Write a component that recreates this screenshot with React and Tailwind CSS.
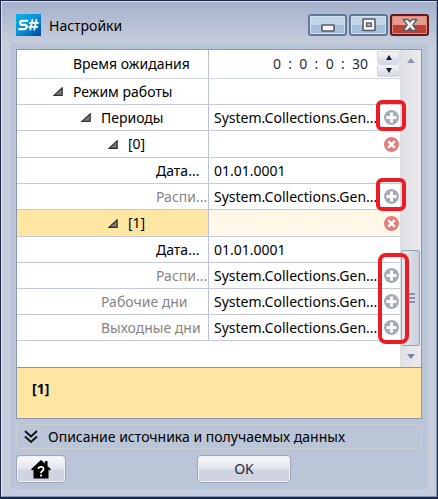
import React from "react";

const rows = [
  { label: "Режим работы", pad: "pl-[56px]", arrow: true },
  { label: "Периоды", pad: "pl-[84px]", arrow: true, value: "System.Collections.Gen...", action: "add" },
  { label: "[0]", pad: "pl-[111px]", arrow: true, action: "remove", index: true },
  { label: "Дата...", pad: "pl-[139px]", value: "01.01.0001" },
  { label: "Распи...", pad: "pl-[139px]", muted: true, value: "System.Collections.Gen...", action: "add" },
  { label: "[1]", pad: "pl-[111px]", arrow: true, action: "remove", index: true, selected: true },
  { label: "Дата...", pad: "pl-[139px]", value: "01.01.0001" },
  { label: "Распи...", pad: "pl-[139px]", muted: true, value: "System.Collections.Gen...", action: "add" },
  { label: "Рабочие дни", pad: "pl-[84px]", muted: true, value: "System.Collections.Gen...", action: "add" },
  { label: "Выходные дни", pad: "pl-[84px]", muted: true, value: "System.Collections.Gen...", action: "add" },
];

function Logo() {
  return (
    <svg viewBox="0 0 25 22" className="h-[22px] w-[25px]" aria-hidden="true">
      <defs>
        <linearGradient id="logo" x1="0" y1="0" x2="1" y2="1">
          <stop offset="0" stopColor="#0bb4e8" />
          <stop offset="0.5" stopColor="#0590d6" />
          <stop offset="1" stopColor="#0346a0" />
        </linearGradient>
      </defs>
      <rect width="25" height="22" fill="url(#logo)" />
      <g fill="none" stroke="#fff" strokeWidth="2.2">
        <path d="M12 6.8H5.8Q4.4 6.8 4.2 8.4T5.2 10.8H9.4Q10.9 11 10.6 13T8.6 15.2H2.2" />
        <path d="M16.6 5.2L14.2 16.4M20.6 5.2L18.2 16.4M13 8.8H22.8M12.2 12.8H22" strokeWidth="1.8" />
      </g>
    </svg>
  );
}

function ActionIcon({ kind }) {
  return kind === "add" ? (
    <svg viewBox="0 0 15 15" className="size-[15px]" aria-hidden="true">
      <circle cx="7.5" cy="7.5" r="7.5" fill="#a4acba" />
      <path d="M7.5 2.5V12.5M2.5 7.5H12.5" stroke="#fff" strokeWidth="3" />
    </svg>
  ) : (
    <svg viewBox="0 0 15 15" className="size-[15px]" aria-hidden="true">
      <circle cx="7.5" cy="7.5" r="7.5" fill="#e6797a" />
      <path d="M4.2 4.2L10.8 10.8M10.8 4.2L4.2 10.8" stroke="#fff" strokeWidth="2.6" />
    </svg>
  );
}

function Row({ label, pad, arrow, value, action, muted, index, selected }) {
  return (
    <div
      className={`flex border-b border-[#c3c9da] ${index ? "h-[27px]" : "h-[26px]"} ${selected ? "bg-[#fff8e8]" : "bg-white"}`}
    >
      <div
        className={`relative flex w-[192px] shrink-0 items-center border-r border-[#b9c2d6] ${pad} ${selected ? "bg-[#ffe6a3]" : ""} ${muted ? "text-[#858585]" : "text-black"}`}
      >
        {arrow && (
          <span className="absolute -translate-x-[20px]">
            <svg viewBox="0 0 10 9" className="h-[9px] w-[10px]" aria-hidden="true">
              <path d="M9.2 0.8V8.4H1Z" fill="#7a7a7a" stroke="#333" strokeWidth="1.2" />
            </svg>
          </span>
        )}
        <span className="whitespace-nowrap">{label}</span>
      </div>
      <div className="flex min-w-0 flex-1 items-center justify-between pr-[1px] pl-[5px]">
        <span className="whitespace-nowrap text-black">{value}</span>
        {action && (
          <button type="button" aria-label={action === "add" ? "Добавить" : "Удалить"}>
            <ActionIcon kind={action} />
          </button>
        )}
      </div>
    </div>
  );
}

const caption =
  "flex h-[22px] w-[39px] items-center justify-center rounded-[3px] border-2";
const blueCaption =
  "border-[#63779a] bg-linear-to-b from-[#c3d6e8] from-50% to-[#a5bfd9] to-50% shadow-[inset_0_0_0_1px_#d3e2ef]";
const command =
  "flex h-[28px] items-center justify-center rounded-[4px] border border-[#9aa6c2] bg-linear-to-b from-[#fafafc] via-[#e2e4ec] via-50% to-[#d0d4e1] to-55% shadow-[inset_0_0_0_1px_#eef0f6]";
const spin =
  "flex h-[13px] w-[23px] items-center justify-center rounded-[2px] border border-[#d5d9e4] bg-linear-to-b from-[#f5f6fa] to-[#d3d7e3]";

export default function App() {
  return (
    <main className="flex min-h-screen flex-col border border-b-2 border-[#1e2a45] bg-[#c6cddc] font-['Noto_Sans','Open_Sans',sans-serif] text-[14px] leading-[20px] text-black">
      <div className="flex flex-1 flex-col border border-[#8496ba] border-t-[#d9dfec] border-l-[#dfe3ee] px-[8px] pb-[7px]">
        <header className="-mx-[8px] flex h-[41px] items-start bg-linear-to-b from-[#a5b1cd] to-[#c6cddc] pr-[7px] pl-[14px] pt-[12px]">
          <Logo />
          <h1 className="ml-[8px] h-[22px] flex-1 leading-[24px]">Настройки</h1>
          <div className="flex gap-[2px]">
            <button type="button" aria-label="Свернуть" className={`${caption} ${blueCaption}`}>
              <svg viewBox="0 0 14 14" className="mt-[2px] size-[14px]" aria-hidden="true">
                <rect x="1" y="6" width="12" height="6" rx="0.5" fill="#f6f5f2" stroke="#555966" strokeWidth="1.6" />
              </svg>
            </button>
            <button type="button" aria-label="Развернуть" className={`${caption} ${blueCaption}`}>
              <svg viewBox="0 0 14 14" className="size-[14px]" aria-hidden="true">
                <rect x="1" y="1" width="12" height="11.5" rx="0.5" fill="#f6f5f2" stroke="#555966" strokeWidth="1.6" />
                <rect x="4.6" y="5" width="4.8" height="3.4" fill="#a7c0da" stroke="#555966" strokeWidth="1.3" />
              </svg>
            </button>
            <button
              type="button"
              aria-label="Закрыть"
              className={`${caption} border-[#5e1c20] bg-linear-to-b from-[#e39c92] from-50% to-[#bd4233] to-50% shadow-[inset_0_0_0_1px_#e08a7c]`}
            >
              <svg viewBox="0 0 16 14" className="h-[14px] w-[16px] shrink-0" aria-hidden="true">
                <path
                  d="M1.3 1.5H6L8 3.8L10 1.5H14.7L10.8 6.9L14.7 12.3H10L8 10L6 12.3H1.3L5.2 6.9Z"
                  fill="#f2f2f3"
                  stroke="#565b66"
                  strokeWidth="1.3"
                  strokeLinejoin="round"
                />
              </svg>
            </button>
          </div>
        </header>

        <div className="flex flex-1 flex-col bg-[#bac6d8] px-[6px] pt-[6px] pb-[6px]">
          <section className="border border-[#8a96ae]">
            <div className="relative flex h-[317px] bg-white">
              <div className="min-w-0 flex-1">
                <div className="flex h-[29px] border-b border-[#d3d8e4]">
                  <label htmlFor="timeout" className="flex w-[192px] shrink-0 items-center border-r border-[#b9c2d6] pl-[56px]">
                    Время ожидания
                  </label>
                  <div className="flex min-w-0 flex-1 items-center">
                    <input
                      id="timeout"
                      defaultValue="0  :  0  :  0  :  30"
                      className="min-w-0 flex-1 bg-transparent pr-[9px] text-right whitespace-pre text-[#1e2a40] outline-none"
                    />
                    <div className="flex flex-col">
                      <button type="button" aria-label="Больше" className={spin}>
                        <svg viewBox="0 0 6 5" className="h-[5px] w-[6px]" aria-hidden="true">
                          <path d="M3 0L6 5H0Z" fill="#111c33" />
                        </svg>
                      </button>
                      <button type="button" aria-label="Меньше" className={spin}>
                        <svg viewBox="0 0 6 5" className="h-[5px] w-[6px]" aria-hidden="true">
                          <path d="M0 0H6L3 5Z" fill="#111c33" />
                        </svg>
                      </button>
                    </div>
                  </div>
                </div>
                {rows.map((row, i) => (
                  <Row key={i} {...row} />
                ))}
              </div>

              <div className="flex w-[21px] shrink-0 flex-col items-center bg-linear-to-r from-[#dfe0e4] to-[#ececee]">
                <button type="button" aria-label="Вверх" className="flex h-[21px] w-full items-center justify-center">
                  <svg viewBox="0 0 8 5" className="h-[5px] w-[8px]" aria-hidden="true">
                    <path d="M4 0L8 5H0Z" fill="#8795b0" />
                  </svg>
                </button>
                <div className="flex w-full flex-1 flex-col justify-end px-[1px]">
                  <div className="flex h-[96px] flex-col items-center justify-center gap-[2px] rounded-[2px] border border-[#9aa2b2] bg-linear-to-r from-[#e7e9ef] to-[#c8cfdd]">
                    <span className="h-[2px] w-[8px] bg-[#8392ae]" />
                    <span className="h-[2px] w-[8px] bg-[#8392ae]" />
                    <span className="h-[2px] w-[8px] bg-[#8392ae]" />
                  </div>
                </div>
                <button type="button" aria-label="Вниз" className="flex h-[21px] w-full items-center justify-center">
                  <svg viewBox="0 0 8 5" className="h-[5px] w-[8px]" aria-hidden="true">
                    <path d="M0 0H8L4 5Z" fill="#7486aa" />
                  </svg>
                </button>
              </div>

              <div className="pointer-events-none absolute top-[50px] right-[15px] h-[31px] w-[30px] rounded-[6px] border-4 border-[#ed1c24]" />
              <div className="pointer-events-none absolute top-[128px] right-[15px] h-[33px] w-[30px] rounded-[6px] border-4 border-[#ed1c24]" />
              <div className="pointer-events-none absolute top-[203px] right-[12px] h-[91px] w-[31px] rounded-[8px] border-4 border-[#ed1c24]" />
            </div>
            <div className="h-[51px] border-t border-[#8a96ae] bg-[#ffe6a3] pt-[11px] pl-[15px] font-bold">[1]</div>
          </section>

          <button type="button" className="mt-[5px] flex h-[25px] items-center rounded-[4px] border border-[#cdcfd4] pl-[7px]">
            <svg viewBox="0 0 14 14" className="size-[14px]" aria-hidden="true">
              <path d="M1 1L7 6.4L13 1M1 6.6L7 12L13 6.6" fill="none" stroke="#111" strokeWidth="2" />
            </svg>
            <span className="ml-[10px] whitespace-nowrap">Описание источника и получаемых данных</span>
          </button>

          <div className="mt-[6px] flex">
            <button type="button" aria-label="Справка" className={`${command} w-[50px]`}>
              <svg viewBox="0 0 20 19" className="h-[19px] w-[20px]" aria-hidden="true">
                <path d="M10 0L14 3.6V1H16.5V6L20 9.2L18.8 10.4L17.5 9.4V18.5H2.5V9.4L1.2 10.4L0 9.2Z" fill="#000" />
                <path d="M7.4 9Q7.6 6.9 10 6.9T12.6 9Q12.6 10.3 11 11.2Q10 11.8 10 13.2M10 14.6V16.6" fill="none" stroke="#fff" strokeWidth="1.8" />
              </svg>
            </button>
            <div className="flex flex-1 justify-center">
              <button type="button" className={`${command} w-[94px] text-[#1e2a40]`}>OK</button>
            </div>
          </div>
        </div>
      </div>
    </main>
  );
}
